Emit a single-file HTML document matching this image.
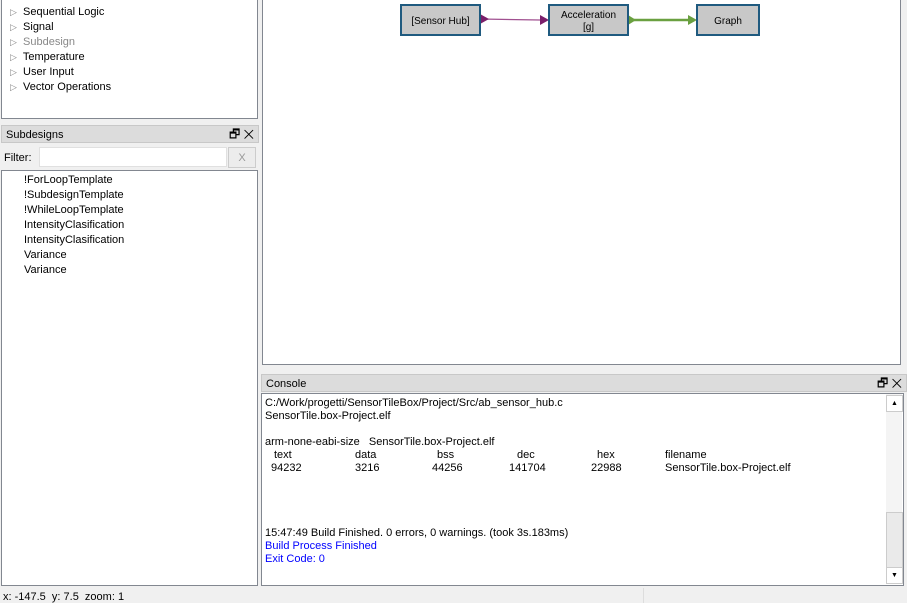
<!DOCTYPE html><html><head><style>
body{margin:0;width:907px;height:603px;background:#f0f0f0;font-family:"Liberation Sans",sans-serif;font-size:11px;color:#000;position:relative;overflow:hidden}
.a{position:absolute}
.box{position:absolute;background:#fff;border:1px solid #828790}
.hdr{position:absolute;background:#dcdcdc;border:1px solid #c8c8c8;height:16px;line-height:18px;padding-left:4px}
.ln{position:absolute;white-space:pre}
.tri{color:#888;font-size:9px}
.node{position:absolute;background:#c8c8c8;border:2px solid #1f5a7f;text-align:center;font-size:10px;box-sizing:border-box;display:flex;align-items:center;justify-content:center;line-height:12px;padding-top:3px}
</style></head><body>
<div class="box" style="left:1px;top:-1px;width:255px;height:118px"></div>
<div class="ln" style="left:10px;top:6px"><span class="tri">▷</span>  Sequential Logic</div>
<div class="ln" style="left:10px;top:21px"><span class="tri">▷</span>  Signal</div>
<div class="ln" style="left:10px;top:36px;color:#888"><span class="tri">▷</span>  Subdesign</div>
<div class="ln" style="left:10px;top:51px"><span class="tri">▷</span>  Temperature</div>
<div class="ln" style="left:10px;top:66px"><span class="tri">▷</span>  User Input</div>
<div class="ln" style="left:10px;top:81px"><span class="tri">▷</span>  Vector Operations</div>
<div class="hdr" style="left:1px;top:125px;width:252px">Subdesigns<span style="position:absolute;right:4px;font-size:12px;top:-1px">🗗 ✕</span></div>
<div class="ln" style="left:4px;top:152px">Filter:</div>
<div class="box" style="left:39px;top:147px;width:186px;height:18px;border-color:#e0e0e0"></div>
<div class="a" style="left:228px;top:147px;width:26px;height:19px;border:1px solid #ccc;background:#ececec;color:#999;text-align:center;line-height:21px">X</div>
<div class="box" style="left:1px;top:170px;width:255px;height:414px"></div>
<div class="ln" style="left:24px;top:174px">!ForLoopTemplate</div>
<div class="ln" style="left:24px;top:189px">!SubdesignTemplate</div>
<div class="ln" style="left:24px;top:204px">!WhileLoopTemplate</div>
<div class="ln" style="left:24px;top:219px">IntensityClasification</div>
<div class="ln" style="left:24px;top:234px">IntensityClasification</div>
<div class="ln" style="left:24px;top:249px">Variance</div>
<div class="ln" style="left:24px;top:264px">Variance</div>
<div class="box" style="left:262px;top:-1px;width:637px;height:364px"></div>
<svg class="a" style="left:0;top:0" width="907" height="60">
<line x1="480" y1="19" x2="540" y2="20" stroke="#a05090" stroke-width="1.2"/>
<polygon points="480,14 489,19 480,24" fill="#7a1f6a"/>
<polygon points="540,15 549,20 540,25" fill="#7a1f6a"/>
<line x1="630" y1="20" x2="688" y2="20" stroke="#6aa040" stroke-width="2.5"/>
<polygon points="628,15 636,20 628,25" fill="#6aa040"/>
<polygon points="688,15 697,20 688,25" fill="#6aa040"/>
</svg>
<div class="node" style="left:400px;top:4px;width:81px;height:32px">[Sensor Hub]</div>
<div class="node" style="left:548px;top:4px;width:81px;height:32px">Acceleration<br>[g]</div>
<div class="node" style="left:696px;top:4px;width:64px;height:32px">Graph</div>
<div class="hdr" style="left:261px;top:374px;width:640px">Console<span style="position:absolute;right:4px;font-size:12px;top:-1px">🗗 ✕</span></div>
<div class="box" style="left:261px;top:393px;width:641px;height:191px"></div>
<div class="a" style="left:886px;top:394px;width:16px;height:190px;background:#f4f4f4"></div>
<div class="a" style="left:886px;top:512px;width:15px;height:54px;background:#eaeaea;border:1px solid #ccc"></div>
<div class="a" style="left:886px;top:395px;width:15px;height:15px;border:1px solid #ccc;background:#fff;font-size:7px;text-align:center;line-height:15px">▲</div>
<div class="a" style="left:886px;top:567px;width:15px;height:15px;border:1px solid #ccc;background:#fff;font-size:7px;text-align:center;line-height:15px">▼</div>
<div class="ln" style="left:265px;top:397px;line-height:13px">C:/Work/progetti/SensorTileBox/Project/Src/ab_sensor_hub.c
SensorTile.box-Project.elf

arm-none-eabi-size   SensorTile.box-Project.elf</div>
<div class="ln" style="left:274px;top:449px">text</div><div class="ln" style="left:355px;top:449px">data</div><div class="ln" style="left:437px;top:449px">bss</div><div class="ln" style="left:517px;top:449px">dec</div><div class="ln" style="left:597px;top:449px">hex</div><div class="ln" style="left:665px;top:449px">filename</div>
<div class="ln" style="left:271px;top:462px">94232</div><div class="ln" style="left:355px;top:462px">3216</div><div class="ln" style="left:432px;top:462px">44256</div><div class="ln" style="left:509px;top:462px">141704</div><div class="ln" style="left:591px;top:462px">22988</div><div class="ln" style="left:665px;top:462px">SensorTile.box-Project.elf</div>
<div class="ln" style="left:265px;top:527px;line-height:13px">15:47:49 Build Finished. 0 errors, 0 warnings. (took 3s.183ms)
<span style="color:#00f">Build Process Finished
Exit Code: 0</span></div>
<div class="ln" style="left:3px;top:591px">x: -147.5  y: 7.5  zoom: 1</div>
<div class="a" style="left:643px;top:588px;width:1px;height:15px;background:#ddd"></div>
</body></html>
